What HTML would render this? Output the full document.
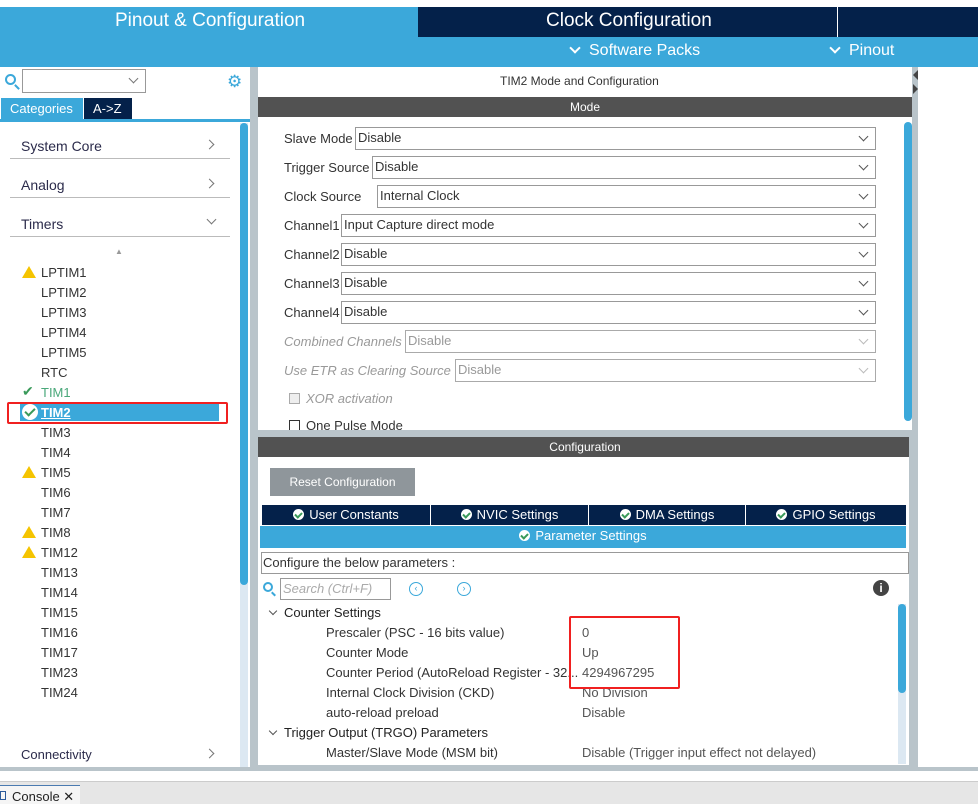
<!DOCTYPE html>
<html><head><meta charset="utf-8"><style>
*{margin:0;padding:0;box-sizing:border-box}
body{width:978px;height:804px;overflow:hidden;background:#fff;font-family:"Liberation Sans",sans-serif;font-size:13px;color:#2b2b4b;position:relative}
.a{position:absolute;white-space:nowrap}
.sel{position:absolute;height:23px;border:1px solid #999;right:102px;background:#fff;padding:2px 2px;color:#333;font-size:13px}
.sel:after{content:"";position:absolute;right:8px;top:5px;width:6px;height:6px;border-right:1px solid #555;border-bottom:1px solid #555;transform:rotate(45deg)}
.dis{color:#999;border-color:#aaa}
.dis:after{border-color:#bbb}
.lbl{position:absolute;left:284px;color:#333}
.it{position:absolute;left:41px;color:#333}
.chev{position:absolute;width:7px;height:7px;border-right:1px solid #777;border-bottom:1px solid #777}
.wch{position:absolute;width:8px;height:8px;border-right:2px solid #fff;border-bottom:2px solid #fff;transform:rotate(45deg)}
.tch{position:absolute;left:270px;width:6px;height:6px;border-right:1px solid #555;border-bottom:1px solid #555;transform:rotate(45deg)}
.tab{position:absolute;top:505px;height:20px;background:#04214a;color:#fff;text-align:center;line-height:20px}
.ck{display:inline-block;width:11px;height:11px;border-radius:50%;background:#fff;vertical-align:-1px;margin-right:5px;position:relative}
.ck:after{content:"";position:absolute;left:3px;top:2px;width:3px;height:5px;border-right:2px solid #3a9a5a;border-bottom:2px solid #3a9a5a;transform:rotate(45deg)}
.warn{position:absolute;left:22px;width:0;height:0;border-left:7px solid transparent;border-right:7px solid transparent;border-bottom:12px solid #f5c400}
.p{position:absolute;color:#333}
</style></head><body>
<!-- header -->
<div class="a" style="left:0;top:7px;width:418px;height:60px;background:#3ba8da"></div>
<div class="a" style="left:418px;top:7px;width:560px;height:30px;background:#04214a"></div>
<div class="a" style="left:837px;top:7px;width:1px;height:30px;background:#fff"></div>
<div class="a" style="left:418px;top:37px;width:560px;height:30px;background:#3ba8da"></div>
<div class="a" style="left:115px;top:10px;font-size:19px;color:#fff">Pinout &amp; Configuration</div>
<div class="a" style="left:546px;top:10px;font-size:19px;color:#fff">Clock Configuration</div>
<div class="wch" style="left:571px;top:44px"></div>
<div class="a" style="left:589px;top:42px;font-size:16px;color:#fff">Software Packs</div>
<div class="wch" style="left:831px;top:44px"></div>
<div class="a" style="left:849px;top:42px;font-size:16px;color:#fff">Pinout</div>
<!-- left panel -->
<div class="a" style="left:250px;top:67px;width:8px;height:700px;background:#b9c4ca"></div>
<div class="a" style="left:5px;top:74px;width:11px;height:11px;border:2px solid #3ba8da;border-radius:50%"></div>
<div class="a" style="left:14px;top:86px;width:6px;height:2px;background:#3ba8da;transform:rotate(45deg)"></div>
<div class="a" style="left:22px;top:69px;width:124px;height:24px;border:1px solid #999"></div>
<div class="chev" style="left:130px;top:75px;transform:rotate(45deg)"></div>
<div class="a" style="left:227px;top:72px;font-size:17px;color:#3ba8da">⚙</div>
<div class="a" style="left:1px;top:98px;width:82px;height:22px;background:#3ba8da;color:#fff;padding:3px 9px">Categories</div>
<div class="a" style="left:84px;top:98px;width:48px;height:22px;background:#04214a;color:#fff;padding:3px 9px">A-&gt;Z</div>
<div class="a" style="left:0;top:119px;width:250px;height:3px;background:#3ba8da"></div>
<div class="a" style="left:240px;top:123px;width:8px;height:644px;background:#dce8f2"></div>
<div class="a" style="left:240px;top:123px;width:8px;height:462px;background:#3ba8da;border-radius:4px"></div>
<div class="a" style="left:21px;top:138px;font-size:14px">System Core</div>
<div class="chev" style="left:206px;top:141px;transform:rotate(-45deg)"></div>
<div class="a" style="left:10px;top:158px;width:220px;height:1px;background:#bbb"></div>
<div class="a" style="left:21px;top:177px;font-size:14px">Analog</div>
<div class="chev" style="left:206px;top:180px;transform:rotate(-45deg)"></div>
<div class="a" style="left:10px;top:197px;width:220px;height:1px;background:#bbb"></div>
<div class="a" style="left:21px;top:216px;font-size:14px">Timers</div>
<div class="chev" style="left:208px;top:216px;transform:rotate(45deg)"></div>
<div class="a" style="left:10px;top:236px;width:220px;height:1px;background:#bbb"></div>
<div class="a" style="left:115px;top:247px;font-size:8px;color:#999">▲</div>
<div class="a" style="left:20px;top:403px;width:199px;height:18px;background:#3ba8da"></div>
<div class="a" style="left:7px;top:402px;width:221px;height:22px;border:2px solid #f02020;border-radius:2px"></div>
<div class="warn" style="top:266px"></div>
<div class="it" style="top:265px">LPTIM1</div>
<div class="it" style="top:285px">LPTIM2</div>
<div class="it" style="top:305px">LPTIM3</div>
<div class="it" style="top:325px">LPTIM4</div>
<div class="it" style="top:345px">LPTIM5</div>
<div class="it" style="top:365px">RTC</div>
<div class="a" style="left:22px;top:383px;color:#3a9a5a;font-size:14px">✔</div>
<div class="it" style="top:385px;color:#4aa87a">TIM1</div>
<div class="a" style="left:22px;top:404px;width:16px;height:16px;border-radius:50%;background:#fff"></div>
<div class="a" style="left:27px;top:406px;width:6px;height:10px;border-right:2px solid #3a9a5a;border-bottom:2px solid #3a9a5a;transform:rotate(45deg)"></div>
<div class="it" style="top:405px;color:#fff;font-weight:bold;text-decoration:underline">TIM2</div>
<div class="it" style="top:425px">TIM3</div>
<div class="it" style="top:445px">TIM4</div>
<div class="warn" style="top:466px"></div>
<div class="it" style="top:465px">TIM5</div>
<div class="it" style="top:485px">TIM6</div>
<div class="it" style="top:505px">TIM7</div>
<div class="warn" style="top:526px"></div>
<div class="it" style="top:525px">TIM8</div>
<div class="warn" style="top:546px"></div>
<div class="it" style="top:545px">TIM12</div>
<div class="it" style="top:565px">TIM13</div>
<div class="it" style="top:585px">TIM14</div>
<div class="it" style="top:605px">TIM15</div>
<div class="it" style="top:625px">TIM16</div>
<div class="it" style="top:645px">TIM17</div>
<div class="it" style="top:665px">TIM23</div>
<div class="it" style="top:685px">TIM24</div>
<div class="a" style="left:21px;top:747px;font-size:13px">Connectivity</div>
<div class="chev" style="left:206px;top:750px;transform:rotate(-45deg)"></div>
<!-- middle -->
<div class="a" style="left:500px;top:74px;color:#333;font-size:12px">TIM2 Mode and Configuration</div>
<div class="a" style="left:258px;top:97px;width:654px;height:20px;background:#525252;color:#fff;text-align:center;line-height:20px;font-size:12px">Mode</div>
<div class="a" style="left:904px;top:122px;width:8px;height:299px;background:#3ba8da;border-radius:4px"></div>
<div class="lbl" style="top:131px">Slave Mode</div><div class="sel" style="left:355px;top:127px">Disable</div>
<div class="lbl" style="top:160px">Trigger Source</div><div class="sel" style="left:372px;top:156px">Disable</div>
<div class="lbl" style="top:189px">Clock Source</div><div class="sel" style="left:377px;top:185px">Internal Clock</div>
<div class="lbl" style="top:218px">Channel1</div><div class="sel" style="left:341px;top:214px">Input Capture direct mode</div>
<div class="lbl" style="top:247px">Channel2</div><div class="sel" style="left:341px;top:243px">Disable</div>
<div class="lbl" style="top:276px">Channel3</div><div class="sel" style="left:341px;top:272px">Disable</div>
<div class="lbl" style="top:305px">Channel4</div><div class="sel" style="left:341px;top:301px">Disable</div>
<div class="lbl" style="top:334px;color:#999;font-style:italic">Combined Channels</div><div class="sel dis" style="left:405px;top:330px">Disable</div>
<div class="lbl" style="top:363px;color:#999;font-style:italic">Use ETR as Clearing Source</div><div class="sel dis" style="left:455px;top:359px">Disable</div>
<div class="a" style="left:289px;top:393px;width:11px;height:11px;border:1px solid #aaa;background:#eee"></div>
<div class="a" style="left:306px;top:391px;color:#999;font-style:italic">XOR activation</div>
<div class="a" style="left:289px;top:420px;width:11px;height:11px;border:1px solid #333"></div>
<div class="a" style="left:306px;top:418px;color:#333;height:12px;overflow:hidden">One Pulse Mode</div>
<div class="a" style="left:258px;top:430px;width:654px;height:7px;background:#b9c4ca"></div>
<div class="a" style="left:258px;top:437px;width:654px;height:20px;background:#525252;color:#fff;text-align:center;line-height:20px;font-size:12px">Configuration</div>
<div class="a" style="left:270px;top:468px;width:145px;height:28px;background:#8f969b;color:#fff;text-align:center;line-height:28px;font-size:12px">Reset Configuration</div>
<div class="tab" style="left:262px;width:168px"><span class="ck"></span>User Constants</div>
<div class="tab" style="left:431px;width:157px"><span class="ck"></span>NVIC Settings</div>
<div class="tab" style="left:589px;width:156px"><span class="ck"></span>DMA Settings</div>
<div class="tab" style="left:746px;width:160px"><span class="ck"></span>GPIO Settings</div>
<div class="a" style="left:260px;top:526px;width:646px;height:22px;background:#3ba8da;color:#fff;text-align:center;line-height:20px"><span class="ck"></span>Parameter Settings</div>
<div class="a" style="left:261px;top:552px;width:648px;height:22px;border:1px solid #999;color:#333;padding:2px 1px">Configure the below parameters :</div>
<div class="a" style="left:263px;top:582px;width:10px;height:10px;border:2px solid #3ba8da;border-radius:50%"></div>
<div class="a" style="left:271px;top:593px;width:5px;height:2px;background:#3ba8da;transform:rotate(45deg)"></div>
<div class="a" style="left:280px;top:578px;width:111px;height:22px;border:1px solid #999;color:#aaa;font-style:italic;padding:2px 2px">Search (Ctrl+F)</div>
<div class="a" style="left:409px;top:582px;width:14px;height:14px;border:1.5px solid #3ba8da;border-radius:50%;color:#3ba8da;font-size:9px;text-align:center;line-height:11px">‹</div>
<div class="a" style="left:457px;top:582px;width:14px;height:14px;border:1.5px solid #3ba8da;border-radius:50%;color:#3ba8da;font-size:9px;text-align:center;line-height:11px">›</div>
<div class="a" style="left:873px;top:580px;width:16px;height:16px;border-radius:50%;background:#444;color:#fff;font-weight:bold;text-align:center;font-size:12px;line-height:16px">i</div>
<div class="a" style="left:898px;top:604px;width:8px;height:160px;background:#dce8f2"></div>
<div class="a" style="left:898px;top:604px;width:8px;height:89px;background:#3ba8da;border-radius:4px"></div>
<div class="tch" style="top:608px"></div><div class="p" style="left:284px;top:605px;color:#222">Counter Settings</div>
<div class="p" style="left:326px;top:625px">Prescaler (PSC - 16 bits value)</div><div class="p" style="left:582px;top:625px;color:#555">0</div>
<div class="p" style="left:326px;top:645px">Counter Mode</div><div class="p" style="left:582px;top:645px;color:#555">Up</div>
<div class="p" style="left:326px;top:665px">Counter Period (AutoReload Register - 32...</div><div class="p" style="left:582px;top:665px;color:#555">4294967295</div>
<div class="p" style="left:326px;top:685px">Internal Clock Division (CKD)</div><div class="p" style="left:582px;top:685px;color:#555">No Division</div>
<div class="p" style="left:326px;top:705px">auto-reload preload</div><div class="p" style="left:582px;top:705px;color:#555">Disable</div>
<div class="tch" style="top:728px"></div><div class="p" style="left:284px;top:725px;color:#222">Trigger Output (TRGO) Parameters</div>
<div class="p" style="left:326px;top:745px">Master/Slave Mode (MSM bit)</div><div class="p" style="left:582px;top:745px;color:#555">Disable (Trigger input effect not delayed)</div>
<div class="a" style="left:569px;top:616px;width:111px;height:73px;border:2px solid #f02020;border-radius:2px"></div>
<div class="a" style="left:258px;top:765px;width:654px;height:4px;background:#b9c4ca"></div>
<div class="a" style="left:909px;top:437px;width:3px;height:330px;background:#b9c4ca"></div>
<!-- right strip -->
<div class="a" style="left:912px;top:67px;width:6px;height:700px;background:#b9c4ca"></div>
<div class="a" style="left:913px;top:70px;width:0;height:0;border-top:5px solid transparent;border-bottom:5px solid transparent;border-right:5px solid #444"></div>
<div class="a" style="left:913px;top:84px;width:0;height:0;border-top:5px solid transparent;border-bottom:5px solid transparent;border-left:5px solid #444"></div>
<!-- bottom -->
<div class="a" style="left:0;top:767px;width:978px;height:4px;background:#b9c4ca"></div>
<div class="a" style="left:0;top:781px;width:978px;height:23px;background:#e6e6e6;border-top:1px solid #ccc"></div>
<div class="a" style="left:0;top:785px;width:80px;height:19px;background:#f5f5f5;border-top:1px solid #4a7ab0"></div>
<div class="a" style="left:0;top:791px;width:6px;height:9px;border:1.5px solid #2b5a9a"></div>
<div class="a" style="left:12px;top:789px;color:#222">Console ✕</div>
</body></html>
